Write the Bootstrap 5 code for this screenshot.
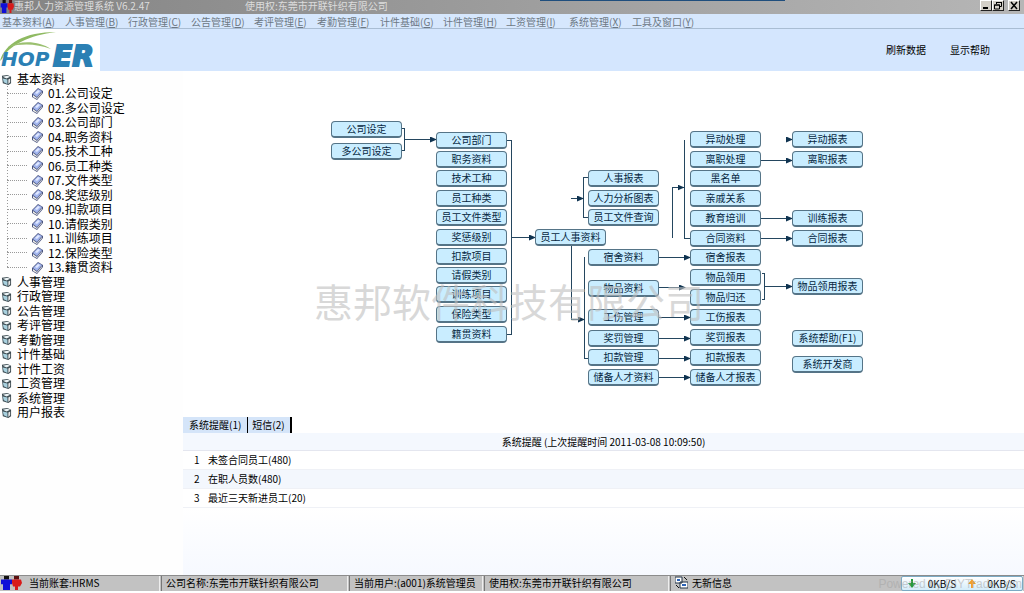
<!DOCTYPE html>
<html lang="zh-CN">
<head>
<meta charset="utf-8">
<meta name="viewport" content="width=device-width, initial-scale=1">
<title>惠邦人力资源管理系统</title>
<link href="https://cdn.jsdelivr.net/npm/bootstrap@5.3.0/dist/css/bootstrap.min.css" rel="stylesheet">
<style>
  body { font-family: "Noto Sans CJK SC", sans-serif; font-size: 10px; line-height: 14px; color: #000; background: #fff; padding-bottom: 2px; }
  button { font: inherit; color: inherit; background: none; border: 0; padding: 0; }
  a { color: inherit; text-decoration: none; }
  .title-bar { height: 14px; line-height: 12px; color: #dcdcdc; background: linear-gradient(90deg, #848484, #b6b6b6); }
  .title-app { width: 231px; }
  .dock-strip { left: 540px; top: 0; width: 245px; height: 1px; background: #1f4e7d; }
  .win-btn { width: 12px; height: 11px; background: #d4d0c8; border: 1px solid; border-color: #fff #222 #222 #fff; }
  .win-btn svg { display: block; }
  .menu-bar { height: 15px; line-height: 13px; color: #6d7884; background: #d6e7fd; border-bottom: 1px solid #a9bdd3; padding-left: 2px; }
  .menu-bar button { min-width: 63px; text-align: left; white-space: nowrap; }
  .tool-bar { height: 42px; background: #d4e6fe; padding-right: 34px; gap: 24px; }
  .side-pane { width: 183px; padding-top: 1px; font-size: 12px; background: #fefefe; }
  .tree-row { height: 14px; white-space: nowrap; gap: 5px; padding-left: 1px; }
  .tree li:nth-child(even) > .tree-row { height: 15px; }
  .tree svg { flex: none; }
  .tree-kids { margin-left: 7px; background: repeating-linear-gradient(#999 0 1px, transparent 1px 3px) 0 0 / 1px calc(100% - 7px) no-repeat; }
  .tree-kids .tree-row { padding-left: 0; gap: 4px; }
  .tree-kids .tree-row::before { content: ""; width: 20px; border-top: 1px dotted #999; }
  .flow-canvas { height: 346px; overflow: hidden; }
  .flow-node { width: 71px; height: 17px; line-height: 14px; text-align: center; white-space: nowrap; color: #06283f; background: #c9edff; border: 1px solid #557487; border-bottom-width: 2px; border-radius: 4px; }
  .flow-mark { left: 131px; top: 206px; font-size: 39px; line-height: 46px; font-weight: 400; color: rgba(190, 190, 190, .6); white-space: nowrap; pointer-events: none; }
  .tab-row button { height: 16px; line-height: 16px; background: #d5e5f9; padding: 0 6px; border-right: 1px solid #000; }
  .tab-row .tab-last { padding: 0 5px 0 4px; border-right-width: 2px; }
  .notice-table { line-height: 18px; border-collapse: collapse; }
  .notice-table td { padding: 0; border-bottom: 1px solid #eff1f6; }
  .notice-table caption { caption-side: top; height: 18px; line-height: 17px; padding: 0; text-align: center; color: #000; background: #f4f8fe; border-bottom: 1px solid #e4e6ef; }
  .notice-table tr:nth-child(even) { background: #f3f7fd; }
  .notice-table .num-col { width: 25px; padding-left: 11px; }
  .rest-pane { background: linear-gradient(#fff, #f6f9ff); }
  .status-bar { height: 16px; line-height: 14px; background: #c2c2c2; border-top: 1px solid #8c8c8c; color: #000; }
  .status-cell { border-left: 1px solid #777; border-right: 1px solid #eee; padding-left: 4px; margin-right: 1px; white-space: nowrap; overflow: hidden; }
  .cell-a { width: 160px; gap: 7px; padding-left: 0; border-left: 0; }
  .cell-b { width: 187px; } .cell-c { width: 134px; } .cell-d { width: 185px; }
  .net-box { right: 1px; bottom: 0; width: 122px; height: 15px; padding: 0 6px; background: linear-gradient(#fff, #d3ecfa); border: 1px solid #7baac4; border-radius: 2px; line-height: 13px; }
  .trade-mark { right: 2px; bottom: 0; color: rgba(160, 160, 160, .5); font-family: "Liberation Sans", sans-serif; font-size: 12px; }
</style>
</head>
<body class="d-flex flex-column min-vh-100">

<svg width="0" height="0" class="position-absolute" aria-hidden="true">
  <symbol id="ic-stack" viewBox="0 0 12 12">
    <path d="M1 2 7 1l4 2v7l-3 2-6-2z" fill="#3b4a50"/><path d="m2 3 5-1 3 1-4 2z" fill="#eef5f7"/>
    <path d="m2 5 5 1v5L3 9z" fill="#a8d0de"/><path d="m8 6 2-1v4l-2 2z" fill="#e8e8e8"/>
  </symbol>
  <symbol id="ic-book" viewBox="0 0 13 13">
    <path d="M1 7 7 1l5 3v2l-6 7-5-3z" fill="#4b5580"/><path d="m2 7 5-5 4 2-5 6z" fill="#a3b6ee"/>
    <path d="m4 6 3-3 2 1-3 3z" fill="#dfe7ff"/><path d="m2 8 4 3 5-6v1l-5 6-4-2z" fill="#f2f2ea"/>
  </symbol>
  <symbol id="ic-people" viewBox="0 0 22 12" preserveAspectRatio="none">
    <path d="M4 0h5v3H4z" fill="#111"/><path d="M1 3h11v4h-2v5H3V7H1z" fill="#1010d8"/>
    <path d="M14 0h5v3h-5z" fill="#5a1010"/><path d="M12 3h9l1 3-2 3h-2v3h-3V9h-2l-1-3z" fill="#d81a1a"/>
  </symbol>
</svg>

<header>
  <div class="title-bar d-flex position-relative">
    <svg width="14" height="13"><use href="#ic-people" width="14" height="13"/></svg>
    <span class="title-app">惠邦人力资源管理系统 V6.2.47</span>
    <span class="flex-grow-1">使用权:东莞市开联针织有限公司</span>
    <span class="dock-strip position-absolute"></span>
    <div class="d-flex pe-1">
      <button class="win-btn" aria-label="最小化"><svg width="10" height="9"><path d="M2 7h5" stroke="#000" stroke-width="2"/></svg></button>
      <button class="win-btn" aria-label="还原"><svg width="10" height="9"><path d="M3.500 3V1.500h5v4H7M3 1.500h6M1.500 4v4h5V4zM1 4h6" fill="none" stroke="#000"/></svg></button>
      <button class="win-btn ms-1" aria-label="关闭"><svg width="10" height="9"><path d="m2 1 6 7M8 1 2 8" stroke="#000" stroke-width="1.500"/></svg></button>
    </div>
  </div>
  <nav class="menu-bar d-flex" aria-label="主菜单">
    <button>基本资料(<u>A</u>)</button><button>人事管理(<u>B</u>)</button><button>行政管理(<u>C</u>)</button><button>公告管理(<u>D</u>)</button><button>考评管理(<u>E</u>)</button><button>考勤管理(<u>F</u>)</button><button>计件基础(<u>G</u>)</button><button>计件管理(<u>H</u>)</button><button>工资管理(<u>I</u>)</button><button>系统管理(<u>X</u>)</button><button>工具及窗口(<u>Y</u>)</button>
  </nav>
  <div class="tool-bar d-flex align-items-center">
    <svg class="me-auto bg-white" width="100" height="42" role="img" aria-label="HOPER">
      <path d="M0 32C5 14 25 3 56 3 30 6 9 16 2 30z" fill="#8fba62"/>
      <path d="M8 18C21 11 39 12 51 20 37 15 23 14 8 18z" fill="#9bc070"/>
      <g font-family="DejaVu Sans" font-weight="bold" font-style="italic" fill="#2b80b4">
        <text x="1" y="37" font-size="20">HOP</text><text x="53" y="37" font-size="28" stroke="#2b80b4" stroke-width="2">ER</text>
      </g>
    </svg>
    <button>刷新数据</button>
    <button>显示帮助</button>
  </div>
</header>

<main class="d-flex flex-grow-1">
  <nav class="side-pane flex-shrink-0" aria-label="功能树">
    <ul class="tree list-unstyled mb-0" id="tree"></ul>
  </nav>
  <section class="flex-grow-1 d-flex flex-column overflow-hidden">
    <div class="flow-canvas position-relative" id="flow">
      <!-- connectors between the nodes -->
      <svg class="position-absolute top-0 start-0" width="700" height="346" viewBox="183 71 700 346" aria-hidden="true">
        <defs><marker id="tip" markerWidth="7" markerHeight="6" refX="6" refY="3" orient="auto" markerUnits="userSpaceOnUse"><path d="M0 0 7 3 0 6z" fill="#0f3350"/></marker></defs>
        <g fill="none" stroke="#24465f" shape-rendering="crispEdges">
          <path d="M402 128.500h2.500v22H402M506 140.500h5.500v194H506M589 177.500h-5.500v40h5.500M684.500 140v98.500h6M571.500 246v73M584.500 257v101.500h4M762 273.500h2.500v26H762"/>
          <g marker-end="url(#tip)">
            <path d="M404 139.500h32"/><path d="M511 237.500h24"/><path d="M571 198.500h12"/><path d="M672.500 238v-50.500h11"/><path d="M571 319.500h13"/>
            <path d="M658 257.500h32"/><path d="M659 287.500h26"/><path d="M659 317.500h31"/><path d="M659 338.500h31"/><path d="M659 358.500h31"/><path d="M659 377.500h31"/>
            <path d="M786 139.500h6"/><path d="M761 160.500h31"/><path d="M761 218.500h31"/><path d="M761 238.500h31"/><path d="M764 286.500h28"/>
          </g>
        </g>
      </svg>
    </div>
    <div class="tab-row d-flex" role="tablist">
      <button role="tab" aria-selected="true">系统提醒(1)</button><button role="tab" aria-selected="false" class="tab-last">短信(2)</button>
    </div>
    <table class="notice-table w-100">
      <caption>系统提醒 (上次提醒时间 2011-03-08 10:09:50)</caption>
      <tbody>
        <tr><td class="num-col">1</td><td>未签合同员工(480)</td></tr>
        <tr><td class="num-col">2</td><td>在职人员数(480)</td></tr>
        <tr><td class="num-col">3</td><td>最近三天新进员工(20)</td></tr>
      </tbody>
    </table>
    <div class="rest-pane flex-grow-1"></div>
  </section>
</main>

<footer class="status-bar d-flex position-relative">
  <div class="status-cell cell-a d-flex"><svg width="22" height="14"><use href="#ic-people" width="22" height="14"/></svg>当前账套:HRMS</div>
  <div class="status-cell cell-b">公司名称:东莞市开联针织有限公司</div>
  <div class="status-cell cell-c">当前用户:(a001)系统管理员</div>
  <div class="status-cell cell-d">使用权:东莞市开联针织有限公司</div>
  <div class="status-cell flex-grow-1 d-flex gap-1"><svg width="13" height="13"><path d="M0 1h7v6H0zM5 6h8v6H5z" fill="#fff" stroke="#234"/><path d="M2 3h3v2H2zM7 8h4v2H7z" fill="#2b63b8"/><path d="M9 1l3 3M1 9l3 3" stroke="#111"/></svg>无新信息</div>
  <div class="net-box position-absolute d-flex align-items-center justify-content-between">
    <svg width="8" height="9"><path d="M3 0h2v4h3L4 9 0 4h3z" fill="#249a3c"/></svg><span>0KB/S</span>
    <svg width="8" height="9"><path d="M3 9h2V5h3L4 0 0 5h3z" fill="#f0a02c"/></svg><span>0KB/S</span>
  </div>
  <span class="trade-mark position-absolute">Powered by DIYTrade.com</span>
</footer>

<script>
  // navigation tree
  const kids = ['公司设定', '多公司设定', '公司部门', '职务资料', '技术工种', '员工种类', '文件类型', '奖惩级别', '扣款项目', '请假类别', '训练项目', '保险类型', '籍贯资料'];
  const roots = ['基本资料', '人事管理', '行政管理', '公告管理', '考评管理', '考勤管理', '计件基础', '计件工资', '工资管理', '系统管理', '用户报表'];
  const row = (icon, size, text) => `<a href="#" class="tree-row d-flex align-items-center"><svg width="${size}" height="${size}"><use href="#${icon}"/></svg>${text}</a>`;
  document.getElementById('tree').innerHTML = roots.map((t, i) => '<li>' + row('ic-stack', 11, t) +
    (i ? '' : '<ul class="tree-kids list-unstyled mb-0">' + kids.map((k, n) => '<li>' + row('ic-book', 13, String(n + 1).padStart(2, '0') + '.' + k) + '</li>').join('') + '</ul>') + '</li>').join('');

  // flow chart: column x, then [label, centre y]
  const columns = [
    [331, [['公司设定', 129], ['多公司设定', 151]]],
    [436, [['公司部门', 140], ['职务资料', 159], ['技术工种', 178], ['员工种类', 198], ['员工文件类型', 217], ['奖惩级别', 237], ['扣款项目', 256], ['请假类别', 275], ['训练项目', 294], ['保险类型', 314], ['籍贯资料', 334]]],
    [535, [['员工人事资料', 237]]],
    [588, [['人事报表', 178], ['人力分析图表', 198], ['员工文件查询', 217], ['宿舍资料', 257], ['物品资料', 288], ['工伤管理', 317], ['奖罚管理', 338], ['扣款管理', 357], ['储备人才资料', 377]]],
    [690, [['异动处理', 139], ['离职处理', 159], ['黑名单', 178], ['亲戚关系', 198], ['教育培训', 218], ['合同资料', 238], ['宿舍报表', 257], ['物品领用', 277], ['物品归还', 297], ['工伤报表', 317], ['奖罚报表', 337], ['扣款报表', 357], ['储备人才报表', 377]]],
    [792, [['异动报表', 139], ['离职报表', 159], ['训练报表', 218], ['合同报表', 238], ['物品领用报表', 286], ['系统帮助(F1)', 338], ['系统开发商', 364]]]
  ];
  const flow = document.getElementById('flow');
  for (const [x, nodes] of columns) for (const [label, y] of nodes)
    flow.insertAdjacentHTML('beforeend', `<button class="flow-node position-absolute" style="left:${x - 183}px;top:${y - 79}px">${label}</button>`);
  flow.insertAdjacentHTML('beforeend', '<span class="flow-mark position-absolute">惠邦软件科技有限公司</span>');
</script>
<script src="https://cdn.jsdelivr.net/npm/bootstrap@5.3.0/dist/js/bootstrap.bundle.min.js"></script>
</body>
</html>
